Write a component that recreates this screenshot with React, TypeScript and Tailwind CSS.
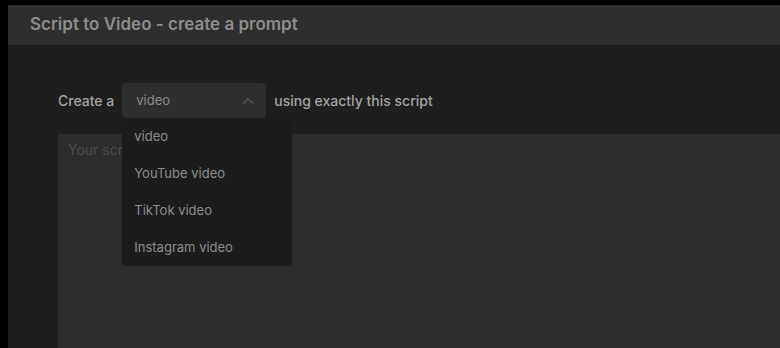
import { ChevronUp } from "lucide-react";

const options = ["video", "YouTube video", "TikTok video", "Instagram video"];

export default function App() {
  return (
    <div
      className="h-[348px] w-[780px] overflow-hidden bg-black pl-2 pt-[5px]"
      style={{ fontFamily: "Inter, 'Noto Sans', sans-serif" }}
    >
      <div className="flex h-full flex-col bg-[#1e1e1e]">
        <div className="flex h-[41px] shrink-0 items-center border-b border-[#1a1a1a] bg-[#2e2e2e] pl-[22px]">
          <h1 className="text-[17px] font-semibold text-[#8c8c8c]">Script to Video - create a prompt</h1>
        </div>

        <div className="flex flex-1 flex-col pl-[50px] pt-[37px]">
          <div className="flex items-center gap-2 text-sm font-medium text-[#a3a3a3]">
            <span>Create a</span>
            <div className="relative">
              <button
                type="button"
                className="flex h-[35px] w-[144px] items-center justify-between rounded bg-[#2e2e2e] pl-[14px] pr-[9px] text-[13px] font-normal text-[#8a8a8a]"
              >
                <span>video</span>
                <ChevronUp className="h-[18px] w-[18px] text-[#777777]" strokeWidth={1.25} />
              </button>
              <div className="absolute left-0 top-[35px] z-10 flex w-[170px] flex-col rounded-b bg-[#1c1c1c] pl-3 text-[13px] font-normal text-[#8c8c8c]">
                {options.map((o) => (
                  <div key={o} className="flex h-[37px] items-center">
                    {o}
                  </div>
                ))}
              </div>
            </div>
            <span>using exactly this script</span>
          </div>

          <textarea
            className="mt-4 flex-1 resize-none bg-[#2c2c2c] px-[10px] py-[6px] text-sm text-[#d0d0d0] outline-none placeholder:text-[#4c4c4c]"
            placeholder="Your script"
          />
        </div>
      </div>
    </div>
  );
}
